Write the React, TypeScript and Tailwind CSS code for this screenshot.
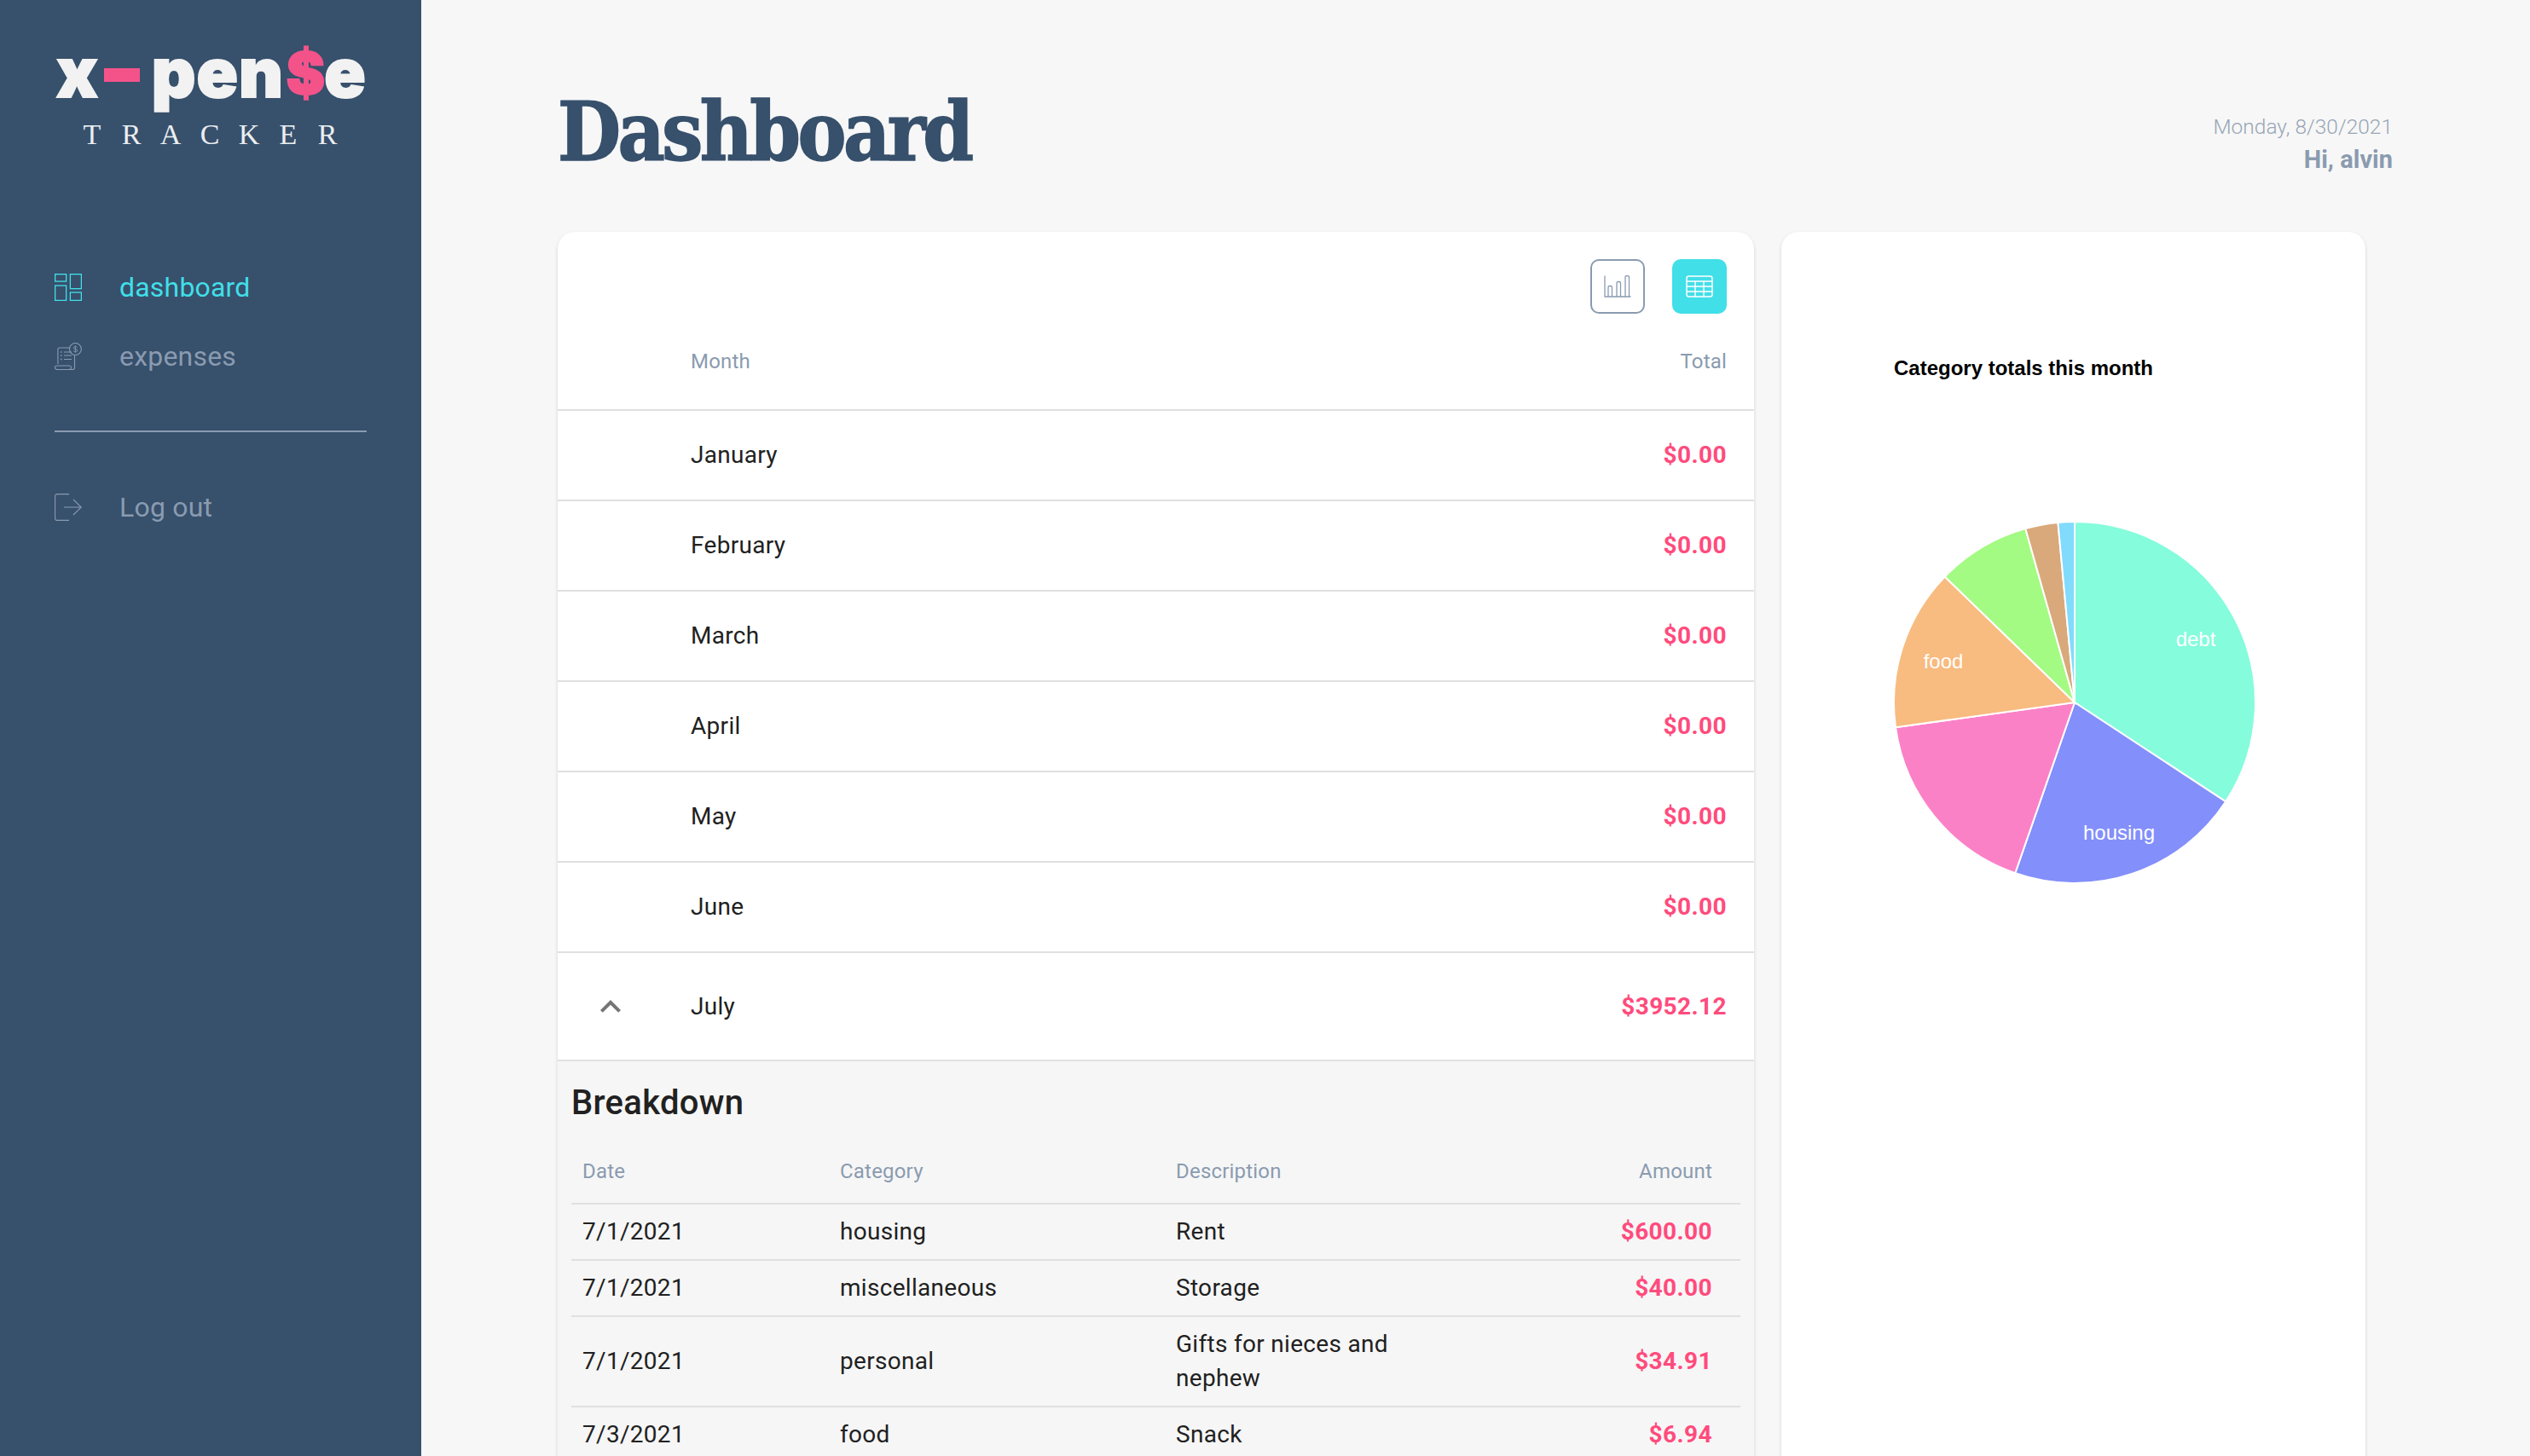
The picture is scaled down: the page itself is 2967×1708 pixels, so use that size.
import React from "react";

const months = ["January", "February", "March", "April", "May", "June"];
const rows = [
  { d: "7/1/2021", c: "housing", t: "Rent", a: "$600.00" },
  { d: "7/1/2021", c: "miscellaneous", t: "Storage", a: "$40.00" },
  { d: "7/1/2021", c: "personal", t: "Gifts for nieces and nephew", a: "$34.91" },
  { d: "7/3/2021", c: "food", t: "Snack", a: "$6.94" },
];

const slices: [number, number, string][] = [
  [0, 123.3, "#85fcdc"],
  [123.3, 199.2, "#838ffb"],
  [199.2, 262.1, "#fb81c7"],
  [262.1, 314.1, "#f8bb80"],
  [314.1, 344.2, "#a3fb83"],
  [344.2, 354.7, "#d9a97b"],
  [354.7, 360, "#80dbfc"],
];

function pt(a: number, r: number) {
  const t = ((a - 90) * Math.PI) / 180;
  return `${(r + r * Math.cos(t)).toFixed(2)} ${(r + r * Math.sin(t)).toFixed(2)}`;
}

function Pie() {
  const R = 226;
  return (
    <svg width={452} height={452} viewBox="0 0 452 452" className="block">
      <g transform="translate(14 14)">
        {slices.map(([a, b, c]) => (
          <path
            key={c}
            d={`M212 212 L${pt(a, 212)} A212 212 0 ${b - a > 180 ? 1 : 0} 1 ${pt(b, 212)} Z`}
            fill={c}
            stroke="#fff"
            strokeWidth={2}
          />
        ))}
      </g>
      <g fill="#fff" fontFamily="'Liberation Sans', sans-serif" fontSize={24} textAnchor="middle">
        <text x={R + 142} y={R - 66}>debt</text>
        <text x={R + 52} y={R + 161}>housing</text>
        <text x={R - 154} y={R - 40}>food</text>
      </g>
    </svg>
  );
}

function Logo() {
  return (
    <div className="flex flex-col items-start">
      <div className="h-[60px] pl-[66px] flex items-center font-['Inter',sans-serif] font-black text-[80px] leading-[60px] text-[#f2f2f2] [-webkit-text-stroke:2px_#f2f2f2]">
        <span className="-mt-[11px]">x</span>
        <span className="w-[42px] h-[16px] bg-[#f4538a] ml-[7px] -mt-[4px]" />
        <span className="ml-[14px] -mt-[11px] tracking-[1px]">pen</span>
        <span className="text-[#f4538a] text-[68px] -mt-[10px] [-webkit-text-stroke:2px_#f4538a] tracking-[-3px] ml-[3px]">$</span>
        <span className="ml-[2px] -mt-[11px]">e</span>
      </div>
      <div className="ml-[97px] mt-[21px] flex gap-[24px] font-['Liberation_Serif',serif] text-white/90 text-[34px] leading-[34px]">
        {"TRACKER".split("").map((c, i) => (
          <span key={i} className="w-[22px] flex justify-center">{c}</span>
        ))}
      </div>
    </div>
  );
}

function NavItem({ icon, label, active }: { icon: React.ReactNode; label: string; active?: boolean }) {
  return (
    <div className={`flex items-center pl-[64px] h-[40px] text-[32px] leading-[40px] ${active ? "text-[#41dfe8]" : "text-[#8a9bb0]"}`}>
      <span className="w-[32px] h-[40px] flex items-center">{icon}</span>
      <span className="ml-[44px] tracking-[0.2px]">{label}</span>
    </div>
  );
}

function DashIcon() {
  return (
    <svg width="32" height="32" viewBox="0 0 32 32" fill="none" stroke="currentColor" strokeWidth="1.3">
      <rect x="0.65" y="0.65" width="13" height="8.4" />
      <rect x="18.4" y="0.65" width="13" height="17" />
      <rect x="0.65" y="14" width="13" height="17.4" />
      <rect x="18.4" y="22" width="13" height="9.4" />
    </svg>
  );
}

function ExpIcon() {
  return (
    <svg width="32" height="32" viewBox="0 0 32 32" fill="none" stroke="currentColor" strokeWidth="1.1">
      <circle cx="24.4" cy="7.5" r="7" />
      <path d="M24.4 3.4v8.2M26.5 5.4c-.5-.8-1.2-1-2.2-1-1.1 0-2 .6-2 1.6 0 2.2 4.4 1 4.4 3.2 0 1-1 1.6-2.2 1.6-1.1 0-1.9-.4-2.4-1.2" strokeWidth="0.9" />
      <path d="M17.5 6H5.5c-1 0-1.6.7-1.6 1.6V25" />
      <path d="M23.5 15v14.2c0 1.3-1 2.3-2.2 2.3H3c-1.5 0-2.5-1-2.5-2.4 0-1.3 1-2.1 2.3-2.1h14.9c1 0 1.7.8 1.7 2 0 1.3-.8 2.5-2 2.5" />
      <path d="M11 11h9M11 15h9M11 19.5h9" />
      <path d="M7 11h1.5M7 15h1.5M7 19.5h1.5" strokeWidth="1.5" />
    </svg>
  );
}

function LogoutIcon() {
  return (
    <svg width="32" height="32" viewBox="0 0 32 32" fill="none" stroke="currentColor" strokeWidth="1.1">
      <path d="M17 .6H3C1.6.6.6 1.6.6 3v26c0 1.4 1 2.4 2.4 2.4h14" />
      <path d="M11 16h20M22 7l9.3 9-9.3 9" />
    </svg>
  );
}

function BarIcon() {
  return (
    <svg width="32" height="26" viewBox="0 0 32 26" fill="none" stroke="#8a9bb0" strokeWidth="1.3" strokeLinejoin="round">
      <path d="M1 0.5v24.5h30.500" />
      <path d="M5 25v-11a1.5 1.5 0 0 1 1.5-1.5h1.500a1.5 1.5 0 0 1 1.5 1.5v11" />
      <path d="M15 25V9a1.5 1.5 0 0 1 1.5-1.5h1.500a1.5 1.5 0 0 1 1.5 1.5v16" />
      <path d="M25 25V2a1.5 1.5 0 0 1 1.5-1.5h1.500a1.5 1.5 0 0 1 1.5 1.5v23" />
    </svg>
  );
}

function TableIcon() {
  return (
    <svg width="32" height="26" viewBox="0 0 32 26" fill="none" stroke="#fff" strokeWidth="1.5">
      <rect x="1" y="1" width="30" height="24" rx="2.5" />
      <path d="M1 7h30M1 13h30M1 19h30M11 7v18M21 7v18" />
    </svg>
  );
}

export default function App() {
  const amount = "font-bold text-[#ff4b7d] tracking-[0.4px]";
  return (
    <div className="h-screen overflow-hidden flex bg-[#f7f7f7] font-['Roboto',sans-serif]">
      <aside className="w-[494px] shrink-0 bg-[#37506c] pt-[60px]">
        <Logo />
        <nav className="mt-[142px]">
          <NavItem active label="dashboard" icon={<DashIcon />} />
          <div className="mt-[41px]">
            <NavItem label="expenses" icon={<ExpIcon />} />
          </div>
        </nav>
        <div className="mx-[64px] mt-[67px] h-[2px] bg-[#8a9bb0]" />
        <div className="mt-[68px]">
          <NavItem label="Log out" icon={<LogoutIcon />} />
        </div>
      </aside>

      <main className="flex-1 min-w-0 pl-[160px] pr-[161px]">
        <header className="h-[272px] flex justify-between">
          <h1 className="mt-[93px] font-['DejaVu_Serif',serif] font-bold text-[#37506c] text-[95px] leading-[124px] [font-stretch:condensed] tracking-[-3.6px] [-webkit-text-stroke:1.5px_#37506c]">
            Dashboard
          </h1>
          <div className="mt-[133px] text-right">
            <div className="text-[24.5px] leading-[32px] font-light text-[#98a6b6]">Monday, 8/30/2021</div>
            <div className="mt-[4px] text-[29px] leading-[36px] font-bold text-[#8a9bb0]">Hi, alvin</div>
          </div>
        </header>

        <div className="flex gap-[32px] items-start">
          <section className="w-[1403px] shrink-0 h-[1500px] bg-white rounded-[20px] shadow-[0_2px_4px_rgba(0,0,0,0.14)] overflow-hidden">
            <div className="flex justify-end gap-[32px] pt-[32px] pr-[32px]">
              <button className="w-[64px] h-[64px] rounded-[10px] border-2 border-[#8a9bb0] flex items-center justify-center">
                <BarIcon />
              </button>
              <button className="w-[64px] h-[64px] rounded-[10px] bg-[#41dfe8] flex items-center justify-center">
                <TableIcon />
              </button>
            </div>
            <div className="h-[114px] flex items-center justify-between border-b-2 border-[#e0e0e0] pl-[156px] pr-[32px] text-[24px] text-[#8a9bb0] tracking-[0.2px]">
              <span>Month</span>
              <span>Total</span>
            </div>
            {months.map((m) => (
              <div key={m} className="h-[106px] flex items-center justify-between border-b-2 border-[#e0e0e0] pl-[156px] pr-[32px] text-[28px] text-[#212121] tracking-[0.3px]">
                <span>{m}</span>
                <span className={amount}>$0.00</span>
              </div>
            ))}
            <div className="h-[127px] flex items-center border-b-2 border-[#e0e0e0] pl-[38px] pr-[32px] text-[28px] text-[#212121] tracking-[0.3px]">
              <svg width="48" height="48" viewBox="0 0 24 24" fill="#757575" className="shrink-0">
                <path d="M7.41 15.41L12 10.83l4.59 4.58L18 14l-6-6-6 6z" />
              </svg>
              <span className="ml-[70px]">July</span>
              <span className={`ml-auto ${amount}`}>$3952.12</span>
            </div>
            <div className="bg-[#f6f6f6] h-[600px] px-[16px] pt-[24px]">
              <h2 className="text-[40px] leading-[50px] font-medium text-[#212121] tracking-[0.3px]">Breakdown</h2>
              <table className="w-[1371px] mt-[27px] table-fixed border-collapse text-[28px] text-[#212121] tracking-[0.3px]">
                <colgroup>
                  <col className="w-[315px]" />
                  <col className="w-[394px]" />
                  <col className="w-[430px]" />
                  <col />
                </colgroup>
                <thead>
                  <tr className="h-[66px] border-b-2 border-[#e0e0e0] text-[24px] text-[#8a9bb0] tracking-[0.2px]">
                    <th className="pl-[13px] pb-[10px] font-normal text-left">Date</th>
                    <th className="pb-[10px] font-normal text-left">Category</th>
                    <th className="pb-[10px] font-normal text-left">Description</th>
                    <th className="pr-[33px] pb-[10px] font-normal text-right">Amount</th>
                  </tr>
                </thead>
                <tbody>
                  {rows.map((r) => (
                    <tr key={r.a} className="border-b-2 border-[#e0e0e0]">
                      <td className="pl-[13px] py-[12px] leading-[40px]">{r.d}</td>
                      <td className="py-[12px] leading-[40px]">{r.c}</td>
                      <td className="py-[12px] leading-[40px]">
                        <div className="max-w-[300px]">{r.t}</div>
                      </td>
                      <td className={`pr-[33px] py-[12px] leading-[40px] text-right ${amount}`}>{r.a}</td>
                    </tr>
                  ))}
                </tbody>
              </table>
            </div>
          </section>

          <section className="w-[685px] shrink-0 h-[1500px] bg-white rounded-[20px] shadow-[0_2px_4px_rgba(0,0,0,0.14)]">
            <h3 className="ml-[132px] mt-[144px] font-['Liberation_Sans',sans-serif] font-bold text-[24px] leading-[32px] text-black">
              Category totals this month
            </h3>
            <div className="ml-[118px] mt-[150px] w-[452px]">
              <Pie />
            </div>
          </section>
        </div>
      </main>
    </div>
  );
}
